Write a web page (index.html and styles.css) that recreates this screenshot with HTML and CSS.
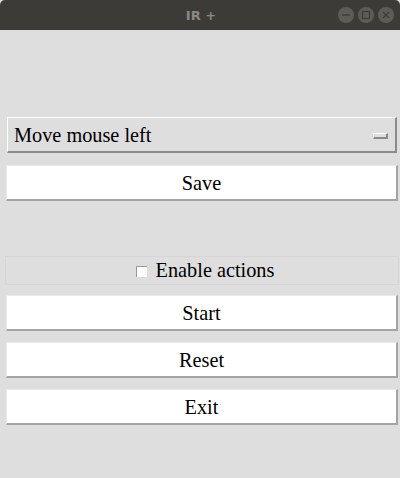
FILE: index.html
```html
<!DOCTYPE html>
<html>
<head>
<meta charset="utf-8">
<link rel="stylesheet" href="styles.css">
</head>
<body>
<div class="window">
  <div class="titlebar">
    <span class="title">IR +</span>
    <div class="controls">
      <span class="ctl"><svg width="16" height="16" viewBox="0 0 16 16"><line x1="4" y1="8" x2="12" y2="8" stroke="#3c3b37" stroke-width="1.3"/></svg></span>
      <span class="ctl"><svg width="16" height="16" viewBox="0 0 16 16"><rect x="4.5" y="4.5" width="7" height="7" fill="none" stroke="#3c3b37" stroke-width="1.2"/></svg></span>
      <span class="ctl"><svg width="16" height="16" viewBox="0 0 16 16"><path d="M5 5L11 11M11 5L5 11" stroke="#3c3b37" stroke-width="1.2"/></svg></span>
    </div>
  </div>
  <div class="content">
    <div class="optionmenu">
      <span>Move mouse left</span>
      <span class="indicator"></span>
    </div>
    <div class="btn save">Save</div>
    <div class="checkframe">
      <span class="checkbox"></span>
      <span>Enable actions</span>
    </div>
    <div class="btn start">Start</div>
    <div class="btn gap">Reset</div>
    <div class="btn gap">Exit</div>
  </div>
</div>
</body>
</html>
```
FILE: styles.css
```css
html, body {
  margin: 0;
  padding: 0;
  background: #dedede;
}
.window {
  width: 400px;
  height: 478px;
  display: flex;
  flex-direction: column;
  background: #dedede;
}
.titlebar {
  height: 30px;
  background: #3c3b37;
  border-radius: 5px 5px 0 0;
  display: flex;
  align-items: center;
  justify-content: center;
  position: relative;
}
.title {
  font-family: "DejaVu Sans", sans-serif;
  font-weight: bold;
  font-size: 13px;
  color: #8a8984;
  margin-left: 2px;
}
.controls {
  position: absolute;
  right: 6px;
  top: 7px;
  display: flex;
  gap: 4px;
}
.ctl {
  width: 16px;
  height: 16px;
  border-radius: 50%;
  background: #5d5c58;
  display: flex;
}
.content {
  display: flex;
  flex-direction: column;
  font-family: "Liberation Serif", serif;
  font-size: 20.3px;
  color: #000;
}
.optionmenu {
  margin: 87px 3px 0 7px;
  height: 36px;
  box-sizing: border-box;
  border-style: solid;
  border-width: 1px 2px 2px 1px;
  border-color: #ffffff #8a8a8a #8a8a8a #ffffff;
  background: #dedede;
  display: flex;
  align-items: center;
  justify-content: space-between;
  padding: 1px 7px 0 6px;
}
.indicator {
  width: 15px;
  height: 6px;
  box-sizing: border-box;
  border-style: solid;
  border-width: 1px 2px 2px 1px;
  border-color: #ffffff #8a8a8a #8a8a8a #ffffff;
  background: #dedede;
  margin-top: 1px;
}
.btn {
  margin: 0 2px 0 6px;
  height: 36px;
  box-sizing: border-box;
  background: #ffffff;
  border-style: solid;
  border-width: 1px 2px 2px 1px;
  border-color: #e9e9e9 #a4a4a4 #a4a4a4 #e9e9e9;
  display: flex;
  align-items: center;
  justify-content: center;
  padding-top: 1px;
}
.save {
  margin-top: 12px;
}
.checkframe {
  margin: 55px 1px 0 5px;
  height: 29px;
  box-sizing: border-box;
  border: 1px solid #d6d6d6;
  display: flex;
  align-items: center;
  justify-content: center;
  gap: 9px;
  padding-left: 6px;
}
.checkbox {
  width: 11px;
  height: 11px;
  box-sizing: border-box;
  background: #fff;
  border-style: solid;
  border-width: 1px 0 0 1px;
  border-color: #9a9a9a;
  margin-top: 1px;
}
.start {
  margin-top: 10px;
}
.gap {
  margin-top: 11px;
}
```
